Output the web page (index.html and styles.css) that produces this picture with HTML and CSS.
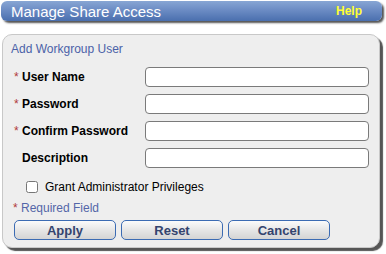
FILE: index.html
```html
<!DOCTYPE html>
<html lang="en">
<head>
    <meta charset="UTF-8">
    <title>Manage Share Access</title>
    <link rel="stylesheet" href="styles.css">
</head>
<body>
    <div class="titlebar">
        <span class="title">Manage Share Access</span>
        <a class="help" href="#">Help</a>
    </div>
    <div class="panel">
        <div class="section">Add Workgroup User</div>
        <form class="user-form">
            <div class="row">
                <label><span class="req">*</span>User Name</label>
                <input type="text">
            </div>
            <div class="row">
                <label><span class="req">*</span>Password</label>
                <input type="password">
            </div>
            <div class="row">
                <label><span class="req">*</span>Confirm Password</label>
                <input type="password">
            </div>
            <div class="row">
                <label><span class="req"></span>Description</label>
                <input type="text">
            </div>
            <div class="check">
                <input type="checkbox" id="admin">
                <label for="admin">Grant Administrator Privileges</label>
            </div>
            <div class="note"><span class="req">*</span> Required Field</div>
            <div class="buttons">
                <button type="button">Apply</button>
                <button type="button">Reset</button>
                <button type="button">Cancel</button>
            </div>
        </form>
    </div>
</body>
</html>
```
FILE: styles.css
```css
body {
    margin: 0;
    padding: 1px 0 0 1px;
    font-family: "Liberation Sans", Arial, sans-serif;
    background-color: #fff;
    width: 386px;
    height: 254px;
    overflow: hidden;
}
.titlebar {
    width: 381px;
    height: 20px;
    box-sizing: border-box;
    display: flex;
    align-items: center;
    justify-content: space-between;
    padding: 0 20px 0 10px;
    border-radius: 6px;
    background: linear-gradient(#88a6d4, #6c8cc4 45%, #4a6fae);
    box-shadow: 2px 2px 2px #555;
}
.title {
    color: #fff;
    font-size: 15px;
}
.help {
    color: #ffff33;
    font-size: 12px;
    font-weight: bold;
    text-decoration: none;
}
.panel {
    margin: 13px 0 0 1px;
    width: 378px;
    height: 214px;
    box-sizing: border-box;
    background-color: #eee;
    border: 1px solid #c8c8c8;
    border-radius: 10px;
    box-shadow: 3px 3px 1px #555;
    padding: 7px 10px 0 8px;
}
.section {
    color: #4b62a8;
    font-size: 12px;
    margin-bottom: 7px;
}
.row {
    display: flex;
    align-items: center;
    height: 27px;
}
.row label {
    width: 134px;
    font-size: 12px;
    font-weight: bold;
    color: #000;
}
.req {
    display: inline-block;
    width: 8px;
    padding-left: 3px;
    color: #b03a3a;
    font-weight: normal;
}
.row input {
    width: 225px;
    height: 20px;
    box-sizing: border-box;
    border: 1px solid #7a7a7a;
    border-radius: 4px;
    background: #fff;
    margin: 0;
}
.check {
    display: flex;
    align-items: center;
    margin: 9px 0 0 15px;
    font-size: 12px;
}
.check input {
    width: 12px;
    height: 12px;
    margin: 0 7px 0 0;
}
.note {
    margin-top: 7px;
    padding-left: 2px;
    font-size: 12px;
    color: #5466a8;
}
.note .req {
    width: auto;
    padding: 0;
}
.buttons {
    display: flex;
    gap: 5px;
    margin: 5px 0 0 3px;
}
.buttons button {
    width: 102px;
    height: 20px;
    padding: 0;
    border: 1px solid #3b6bb3;
    border-radius: 5px;
    background: linear-gradient(#fbfbfb, #e6e6e6 50%, #d4d4d4);
    color: #34446e;
    font-family: "Liberation Sans", Arial, sans-serif;
    font-size: 13px;
    font-weight: bold;
    cursor: pointer;
}
```
